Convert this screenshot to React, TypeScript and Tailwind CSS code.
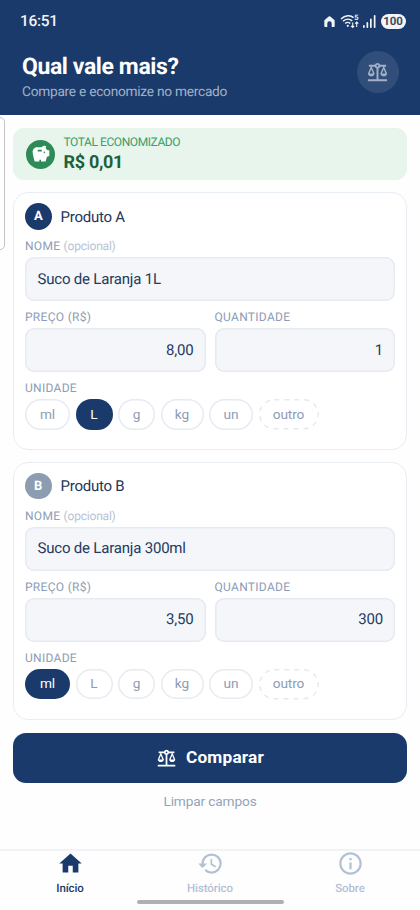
import React from "react";
import { MdBalance, MdHistory, MdHome, MdInfoOutline, MdSavings } from "react-icons/md";

const units = [
  { name: "ml", width: "w-[45px]" },
  { name: "L", width: "w-[37px]" },
  { name: "g", width: "w-[37px]" },
  { name: "kg", width: "w-[43px]" },
  { name: "un", width: "w-[44px]" },
  { name: "outro", width: "w-[60px]" },
];

function Label({ children }: { children: React.ReactNode }) {
  return <div className="h-[15px] text-[12px] leading-[15px] tracking-[0.3px] text-[#8c9db5] whitespace-nowrap">{children}</div>;
}

function Field({ value, right }: { value: string; right?: boolean }) {
  return (
    <div className={`flex h-[44px] items-center rounded-[9px] bg-[#f4f6fa] px-[12.5px] text-[15px] tracking-[-0.2px] text-[#243b5f] shadow-[inset_0_0_0_1.5px_#e6eaf1] ${right ? "justify-end pr-[12px]" : ""}`}>
      {value}
    </div>
  );
}

function Product({ letter, name, price, quantity, unit }: { letter: string; name: string; price: string; quantity: string; unit: string }) {
  return (
    <section className="h-[258px] rounded-[15px] border border-[#e8edf4] bg-white px-[11px] pt-[10px]">
      <div className="flex h-[27px] items-center gap-[9px]">
        <div className={`flex size-[26.5px] items-center justify-center rounded-full pt-px text-[13px] font-bold text-white ${letter === "A" ? "bg-[#1a3a6b]" : "bg-[#8c9db2]"}`}>{letter}</div>
        <h2 className="pt-px text-[15px] tracking-[-0.25px] text-[#1f355b]">Produto {letter}</h2>
      </div>
      <div className="mt-[9px]">
        <Label>NOME <span className="tracking-[-0.2px] text-[#b7c3d6]">(opcional)</span></Label>
      </div>
      <div className="mt-[3px]"><Field value={name} /></div>
      <div className="mt-[9px] grid grid-cols-2 gap-[9px]">
        <div>
          <Label>PREÇO (R$)</Label>
          <div className="mt-[3px]"><Field value={price} right /></div>
        </div>
        <div>
          <Label>QUANTIDADE</Label>
          <div className="mt-[3px]"><Field value={quantity} right /></div>
        </div>
      </div>
      <div className="mt-[9px]"><Label>UNIDADE</Label></div>
      <div className="mt-[3px] flex gap-[5.5px]">
        {units.map((u) => (
          <button
            key={u.name}
            className={`${u.width} relative flex h-[30.5px] shrink-0 items-center justify-center rounded-full text-[13.7px] tracking-[-0.1px] ${u.name === unit ? "bg-[#1a3a6b] text-white" : "text-[#8c9db5]"} ${u.name !== unit && u.name !== "outro" ? "shadow-[inset_0_0_0_1.5px_#e6ebf2]" : ""}`}
          >
            {u.name === "outro" && (
              <svg className="absolute inset-0" width="60" height="31" viewBox="0 0 60 31" fill="none">
                <rect x=".75" y=".75" width="58.5" height="29" rx="14.5" stroke="#e3e9f1" strokeWidth="1.4" strokeDasharray="5 5" />
              </svg>
            )}
            {u.name}
          </button>
        ))}
      </div>
    </section>
  );
}

function StatusIcons() {
  return (
    <div className="flex items-center text-[#f2f4f8]">
      <svg width="11" height="11" viewBox="0 0 10 10" fill="currentColor">
        <path d="M4.3.5a1.1 1.1 0 0 1 1.4 0L9.2 3.4q.5.4.5 1V9.3q0 .7-.7.7H7V6.8a2 2 0 0 0-4 0V10H1Q.3 10 .3 9.3V4.4q0-.6.5-1Z" />
      </svg>
      <svg className="ml-[5px]" width="20" height="15" viewBox="0 0 20 15" fill="none" stroke="currentColor">
        <path d="M1 5C5 1 10.5 .8 13.5 3.6M3 7.3c2.7-2.7 6.4-2.8 9.2-.5M5.2 9.5c1.5-1.5 3.6-1.5 5.1 0" strokeWidth="1.5" />
        <circle cx="7.8" cy="11.8" r="1.1" fill="currentColor" stroke="none" />
        <path d="M12.7 8.5v5M11 11.8l1.7 1.7 1.5-1.7M16.7 13V8M15.2 9.7 16.7 8l1.6 1.7" strokeWidth="1.1" />
        <text x="14.3" y="6.2" fontFamily="Roboto, sans-serif" fontSize="7.5" fontWeight="700" fill="currentColor" stroke="none">5</text>
      </svg>
      <svg className="ml-[3px]" width="13" height="13" viewBox="0 0 13 13" fill="currentColor">
        <rect x="0" y="10" width="1.7" height="3" rx=".8" />
        <rect x="3.5" y="7" width="1.7" height="6" rx=".8" />
        <rect x="7" y="3.5" width="1.7" height="9.5" rx=".8" />
        <rect x="10.8" y="0" width="1.7" height="13" rx=".8" />
      </svg>
      <span className="ml-[5px] flex h-[15px] w-[25px] items-center justify-center rounded-full bg-[#f4f5f8] text-[11.5px] font-bold tracking-[-0.1px] text-[#414b5b]">100</span>
    </div>
  );
}

export default function App() {
  return (
    <div className="relative flex h-[910px] w-[420px] flex-col overflow-hidden bg-[#fefefe] font-[Roboto,sans-serif] [text-rendering:geometricPrecision]">
      <header className="h-[115px] shrink-0 bg-[#1a3a6b]">
        <div className="flex h-[43px] items-center justify-between pl-5 pr-[14.5px]">
          <time className="text-[15.5px] font-medium tracking-[-0.3px] text-[#f2f4f8]">16:51</time>
          <StatusIcons />
        </div>
        <div className="flex justify-between pl-[22px] pr-[21.5px]">
          <div className="pt-[10px]">
            <h1 className="text-[23px] leading-[28px] font-bold tracking-[-0.4px] text-white">Qual vale mais?</h1>
            <p className="mt-[3px] text-[13.7px] leading-[16px] tracking-[-0.25px] text-[#a3b1c6]">Compare e economize no mercado</p>
          </div>
          <div className="mt-[8px] flex size-[42px] items-center justify-center rounded-full bg-[#314e7a] text-[#a3b1c6]">
            <MdBalance size={23} />
          </div>
        </div>
      </header>

      <main className="flex-1 px-[13px] pt-[13px]">
        <section className="flex h-[52px] items-center gap-[8.5px] rounded-[11px] bg-[#e7f5ec] pl-[13px]">
          <div className="flex size-[29px] items-center justify-center rounded-full bg-[#2e8b57] text-white"><MdSavings size={20} /></div>
          <div>
            <div className="pt-px text-[12px] leading-[15px] tracking-[-0.42px] text-[#3b9d69]">TOTAL ECONOMIZADO</div>
            <div className="mt-[2px] text-[18px] leading-[22px] font-bold tracking-[-0.3px] text-[#1c613b]">R$ 0,01</div>
          </div>
        </section>
        <div className="mt-[12px] flex flex-col gap-[11.5px]">
          <Product letter="A" name="Suco de Laranja 1L" price="8,00" quantity="1" unit="L" />
          <Product letter="B" name="Suco de Laranja 300ml" price="3,50" quantity="300" unit="ml" />
        </div>
        <button className="mt-[13px] flex h-[50.5px] w-full items-center justify-center gap-[9px] rounded-[13px] bg-[#1a3a6b] pt-px text-[17.3px] font-bold tracking-[0.2px] text-white">
          <MdBalance size={21} />
          Comparar
        </button>
        <button className="mt-[8.5px] block w-full text-center text-[13.7px] leading-[18px] tracking-[-0.15px] text-[#93a4ba]">Limpar campos</button>
      </main>

      <nav className="flex h-[61px] shrink-0 flex-col border-t-2 border-[#f1f3f7]">
        <div className="-mt-px grid grid-cols-3 text-[11.5px] font-medium tracking-[-0.1px] text-[#b3c1d5]">
          <div className="flex flex-col items-center text-[#1a3a6b]"><MdHome size={27} /><span className="mt-[3px] leading-[16px]">Início</span></div>
          <div className="flex flex-col items-center"><MdHistory size={27} /><span className="mt-[3px] leading-[16px]">Histórico</span></div>
          <div className="flex flex-col items-center"><MdInfoOutline size={27} /><span className="mt-[3px] leading-[16px]">Sobre</span></div>
        </div>
        <div className="mx-auto mt-[4px] h-[4px] w-[147px] shrink-0 rounded-full bg-[#b0b0b0]" />
      </nav>
      <div className="absolute top-[117px] -left-1 h-[133px] w-[9px] rounded-r-[5px] border-[1.5px] border-[#c4c4c4] bg-white" />
    </div>
  );
}
